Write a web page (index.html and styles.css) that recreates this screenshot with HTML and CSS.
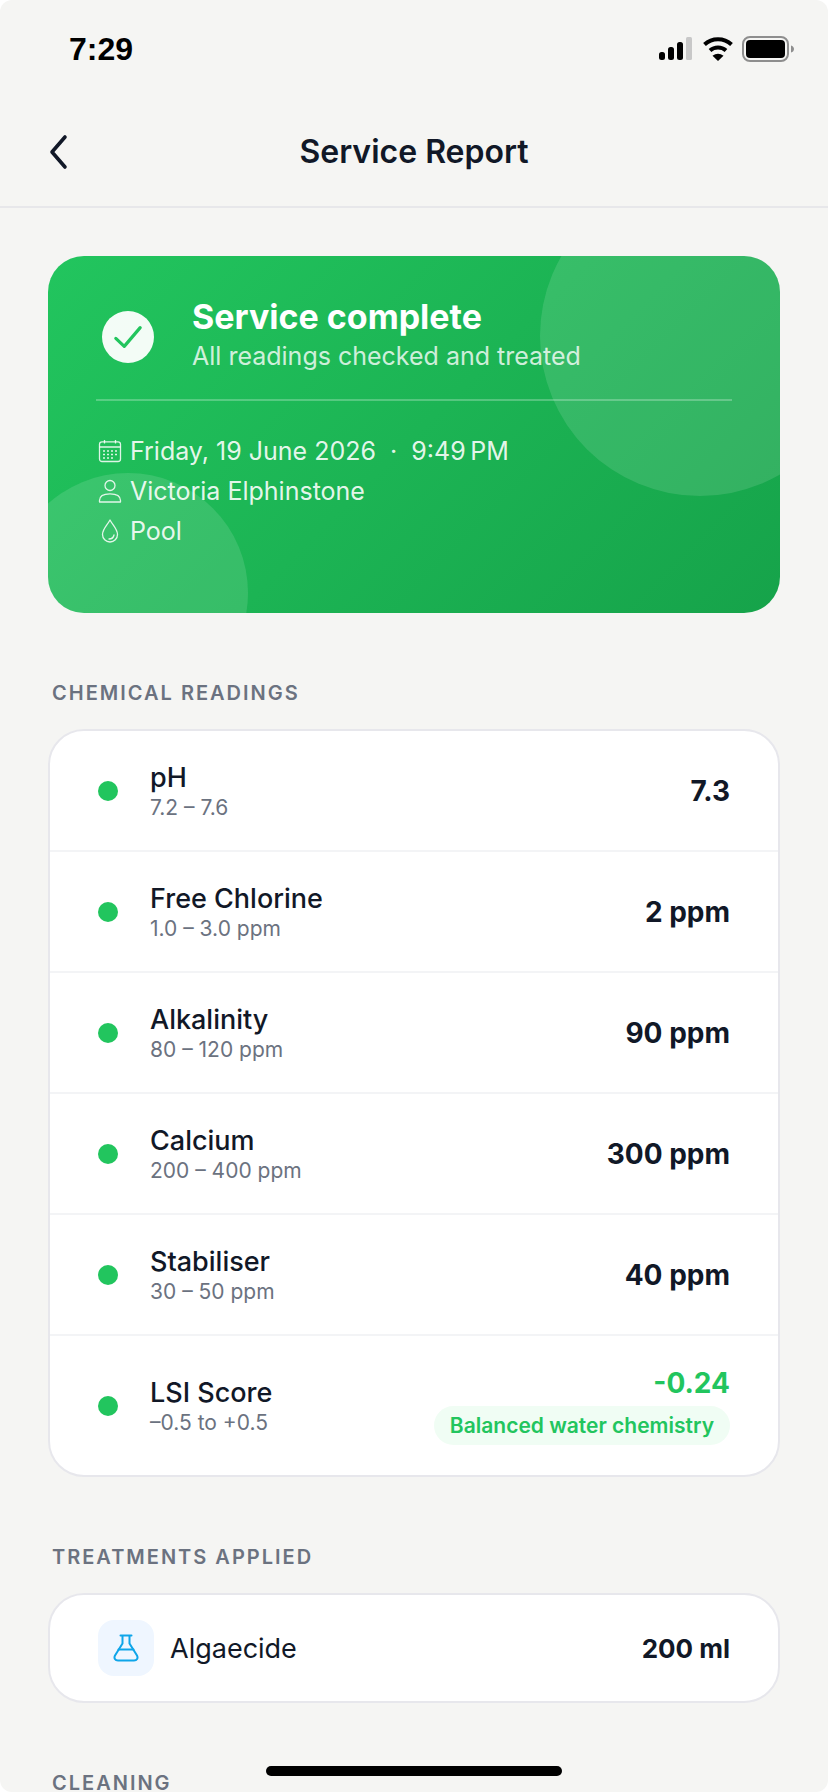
FILE: index.html
```html
<!DOCTYPE html>
<html lang="en">
<head>
<meta charset="utf-8">
<title>Service Report</title>
<link rel="stylesheet" href="styles.css">
</head>
<body>
<div class="screen">
  <div class="status">
    <span class="time">7:29</span>
    <div class="status-icons">
      <svg width="36" height="24" viewBox="0 0 36 24"><rect x="1" y="15" width="6" height="8" rx="2.5" fill="#000"/><rect x="10" y="10" width="6" height="13" rx="2.5" fill="#000"/><rect x="19" y="5" width="6" height="18" rx="2.5" fill="#000"/><rect x="28" y="0" width="6" height="23" rx="1.5" fill="#c8c8c8"/></svg>
      <svg width="32" height="26" viewBox="0 0 32 26"><path d="M2.5 8.5C10 1.5 22 1.500 29.500 8.500" fill="none" stroke="#000" stroke-width="4"/><path d="M8 14.500C12.500 10.500 19.500 10.500 24 14.500" fill="none" stroke="#000" stroke-width="4"/><path d="M16 25 10.500 19.800C14 17 18 17 21.500 19.800Z" fill="#000"/></svg>
      <svg width="52" height="26" viewBox="0 0 52 26"><rect x="1" y="1" width="45" height="24" rx="7" fill="none" stroke="#8e8e8e" stroke-width="2"/><rect x="4" y="4" width="39" height="18" rx="4" fill="#000"/><path d="M49 9.500C51 10 52 11.500 52 13S51 16 49 16.500Z" fill="#8e8e8e"/></svg>
    </div>
  </div>
  <header class="nav">
    <svg class="back" width="24" height="36" viewBox="0 0 24 36"><path d="M19 3 6 18l13 15" fill="none" stroke="#111827" stroke-width="3.600" stroke-linecap="round" stroke-linejoin="round"/></svg>
    <h1 class="nav-title">Service Report</h1>
  </header>
  <main class="content">
    <section class="hero">
      <span class="blob blob-a"></span>
      <span class="blob blob-b"></span>
      <div class="hero-top">
        <span class="check">
          <svg width="32" height="32" viewBox="0 0 32 32"><path d="M3 17.500 12 26 29 6" fill="none" stroke="#22c55e" stroke-width="3.400" stroke-linecap="round" stroke-linejoin="round"/></svg>
        </span>
        <div>
          <div class="hero-title">Service complete</div>
          <div class="hero-sub">All readings checked and treated</div>
        </div>
      </div>
      <div class="hero-meta">
        <div class="meta-row">
          <svg class="meta-icon" width="24" height="24" viewBox="0 0 24 24" fill="none" stroke="currentColor" stroke-width="1.300"><rect x="1.500" y="2.800" width="21" height="19.700" rx="2.500"/><path d="M1.500 8h21M6.500 1v3.500M17.500 1v3.500"/><path d="M5 12h2M9 12h2M13 12h2M17 12h2M5 15.500h2M9 15.500h2M13 15.500h2M17 15.500h2M5 19h2M9 19h2M13 19h2" stroke-width="1.500"/></svg>
          <span>Friday, 19 June 2026 &nbsp;·&nbsp; 9:49&#8201;PM</span>
        </div>
        <div class="meta-row">
          <svg class="meta-icon" width="24" height="24" viewBox="0 0 24 24" fill="none" stroke="currentColor" stroke-width="1.300"><circle cx="12" cy="6.500" r="5"/><path d="M1.500 23v-1.500C1.500 17 6 14.800 12 14.800s10.500 2.200 10.500 6.700V23Z" stroke-linejoin="round"/></svg>
          <span>Victoria Elphinstone</span>
        </div>
        <div class="meta-row">
          <svg class="meta-icon" width="24" height="24" viewBox="0 0 24 24" fill="none" stroke="currentColor" stroke-width="1.300"><path d="M12 1C9.500 6 4.500 10 4.500 15.500a7.500 7.500 0 0 0 15 0C19.500 10 14.500 6 12 1Z" stroke-linejoin="round"/><path d="M11 20c2.500 0 4.500-1.500 5-4" stroke-linecap="round"/></svg>
          <span>Pool</span>
        </div>
      </div>
    </section>

    <h2 class="label">CHEMICAL READINGS</h2>
    <section class="card">
      <div class="row"><span class="dot"></span><div class="row-text"><div class="name">pH</div><div class="range">7.2 – 7.6</div></div><div class="value">7.3</div></div>
      <div class="row"><span class="dot"></span><div class="row-text"><div class="name">Free Chlorine</div><div class="range">1.0 – 3.0 ppm</div></div><div class="value">2 ppm</div></div>
      <div class="row"><span class="dot"></span><div class="row-text"><div class="name">Alkalinity</div><div class="range">80 – 120 ppm</div></div><div class="value">90 ppm</div></div>
      <div class="row"><span class="dot"></span><div class="row-text"><div class="name">Calcium</div><div class="range">200 – 400 ppm</div></div><div class="value">300 ppm</div></div>
      <div class="row"><span class="dot"></span><div class="row-text"><div class="name">Stabiliser</div><div class="range">30 – 50 ppm</div></div><div class="value">40 ppm</div></div>
      <div class="row row-lsi"><span class="dot"></span><div class="row-text"><div class="name">LSI Score</div><div class="range">–0.5 to +0.5</div></div>
        <div class="lsi"><div class="value value-good">-0.24</div><div class="pill">Balanced water chemistry</div></div>
      </div>
    </section>

    <h2 class="label">TREATMENTS APPLIED</h2>
    <section class="card">
      <div class="treat">
        <span class="treat-icon">
          <svg width="26" height="28" viewBox="0 0 26 28" fill="none" stroke="#0ea5e9" stroke-width="2" stroke-linejoin="round" stroke-linecap="round"><path d="M7.500 1.500h11M9.500 1.500v8L2 21.500c-1.300 2.500 0 5 3 5h16c3 0 4.300-2.500 3-5L16.500 9.500v-8"/><path d="M5.500 15.500h15"/></svg>
        </span>
        <span class="treat-name">Algaecide</span>
        <span class="treat-value">200 ml</span>
      </div>
    </section>

    <h2 class="label">CLEANING</h2>
  </main>
  <div class="home"></div>
</div>
</body>
</html>
```
FILE: styles.css
```css
* { box-sizing: border-box; }
html, body { margin: 0; padding: 0; background: #fff; }
body { width: 828px; height: 1792px; overflow: hidden; font-family: Inter, "Liberation Sans", sans-serif; color: #111827; }
.screen { position: relative; width: 828px; height: 1792px; overflow: hidden; background: #f5f5f3; border-radius: 12px; }

.status { height: 96px; padding: 0 34px 0 69px; display: flex; align-items: center; justify-content: space-between; }
.status .time { font-size: 32px; font-weight: 600; color: #000; margin-top: 2px; font-family: "Liberation Sans", sans-serif; }
.status-icons { display: flex; align-items: center; gap: 8px; margin-top: 2px; }

.nav { position: relative; height: 112px; border-bottom: 2px solid #e7e7ea; display: flex; align-items: center; justify-content: center; }
.back { position: absolute; left: 46px; top: 38px; }
.nav-title { margin: 0; font-size: 32px; font-weight: 600; color: #111827; letter-spacing: 0; }

.content { padding: 48px 48px 0; }

.hero { position: relative; overflow: hidden; height: 357px; border-radius: 36px; padding: 48px; color: #fff; background: linear-gradient(135deg, #22c55e 0%, #16a34a 100%); }
.blob { position: absolute; border-radius: 50%; background: rgba(255,255,255,.12); }
.blob-a { width: 320px; height: 320px; top: -80px; right: -80px; }
.blob-b { width: 240px; height: 240px; left: -40px; bottom: -100px; }

.hero-top { position: relative; display: flex; align-items: center; gap: 38px; padding: 0 0 30px 6px; height: 96px; border-bottom: 2px solid rgba(255,255,255,.25); height: 97px; }
.check { width: 52px; height: 52px; border-radius: 50%; background: rgba(255,255,255,.95); display: flex; align-items: center; justify-content: center; margin-top: 0; }
.check svg { width: 30px; height: 30px; }
.hero-title { font-size: 34px; font-weight: 700; line-height: 40px; color: #fff; margin-top: -5px; }
.hero-sub { font-size: 25px; line-height: 32px; color: rgba(255,255,255,.8); margin-top: 3px; }

.hero-meta { position: relative; padding-top: 30px; }
.meta-row { display: flex; align-items: center; gap: 8px; height: 40px; font-size: 25px; color: rgba(255,255,255,.9); padding-left: 2px; }
.meta-icon { flex: none; color: rgba(255,255,255,.85); }

.label { margin: 68px 4px 24px; font-size: 20px; line-height: 24px; font-weight: 600; letter-spacing: 2px; color: #6b7280; }

.card { background: #fff; border: 2px solid #e7e7ec; border-radius: 36px; overflow: hidden; }
.row { display: flex; align-items: center; height: 121px; padding: 0 48px; border-bottom: 2px solid #f3f4f6; }
.row:last-child { border-bottom: 0; }
.row-lsi { height: 139px; }
.dot { flex: none; width: 20px; height: 20px; border-radius: 50%; background: #22c55e; margin-right: 32px; }
.row-text { flex: 1; }
.name { font-size: 27px; line-height: 34px; font-weight: 500; color: #111827; }
.range { font-size: 21px; line-height: 26px; color: #6b7280; }
.value { font-size: 28px; font-weight: 700; color: #111827; text-align: right; }
.value-good { color: #22c55e; }
.lsi { display: flex; flex-direction: column; align-items: flex-end; gap: 6px; }
.pill { height: 39px; line-height: 39px; padding: 0 16px; border-radius: 20px; background: #f0fdf4; color: #22c55e; font-size: 21px; font-weight: 600; }

.treat { display: flex; align-items: center; height: 106px; padding: 0 48px; }
.treat-icon { flex: none; width: 56px; height: 56px; border-radius: 16px; background: #eff6ff; display: flex; align-items: center; justify-content: center; margin-right: 16px; }
.treat-name { flex: 1; font-size: 27px; font-weight: 400; }
.treat-value { font-size: 26px; font-weight: 700; }

.home { position: absolute; left: 266px; bottom: 16px; width: 296px; height: 10px; border-radius: 5px; background: #000; }
```
